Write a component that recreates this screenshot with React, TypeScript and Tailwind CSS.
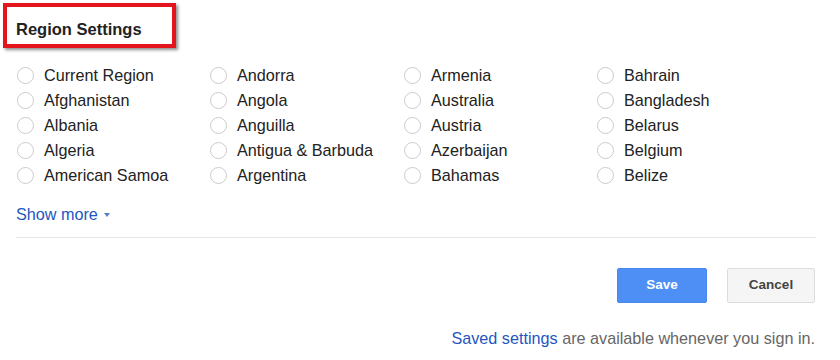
const regions = [
  ["Current Region", "Andorra", "Armenia", "Bahrain"],
  ["Afghanistan", "Angola", "Australia", "Bangladesh"],
  ["Albania", "Anguilla", "Austria", "Belarus"],
  ["Algeria", "Antigua & Barbuda", "Azerbaijan", "Belgium"],
  ["American Samoa", "Argentina", "Bahamas", "Belize"],
];

function Radio({ label }: { label: string }) {
  return (
    <label className="flex h-[25px] items-center gap-[10px] text-[16.2px] leading-[25px] text-[#222]">
      <span className="h-[17px] w-[17px] shrink-0 rounded-full border border-[#cbcbcb] bg-white" />
      <span className="whitespace-nowrap">{label}</span>
    </label>
  );
}

export default function App() {
  return (
    <div className="h-[360px] w-[840px] overflow-hidden bg-white font-['Liberation_Sans',Arial,sans-serif]">
      <div className="ml-[3px] mt-[3px] h-[45px] w-[173px] border-4 border-[#e3141b] pl-[9px] pt-[14px] shadow-[2px_2px_3px_rgba(0,0,0,0.45)]">
        <h2 className="whitespace-nowrap text-[16.5px] font-bold leading-none text-[#222]">Region Settings</h2>
      </div>

      <div className="pl-4 pr-6">
        <div className="mt-[14.5px] grid grid-cols-[193px_194px_193px_auto] pl-px">
          {regions.map((row) =>
            row.map((name) => <Radio key={name} label={name} />)
          )}
        </div>

        <button className="mt-4 flex h-5 items-center gap-[6px] text-[16.2px] leading-5 text-[#1f56c0]">
          Show more
          <span className="mt-[2px] h-0 w-0 border-x-[3.5px] border-t-4 border-x-transparent border-t-[#5a7fc8]" />
        </button>

        <div className="mt-[13.5px] h-px bg-[#e5e5e5]" />

        <div className="mt-[30px] flex justify-end gap-5 pr-px">
          <button className="h-[35px] w-[90px] rounded-[2px] border border-[#4787ee] bg-[#4d8ff5] text-[13.5px] font-bold text-white">
            Save
          </button>
          <button className="h-[35px] w-[88px] rounded-[2px] border border-[#dcdcdc] bg-[#f5f5f5] text-[13.5px] font-bold text-[#444]">
            Cancel
          </button>
        </div>

        <p className="mt-[24.5px] pr-px text-right text-[16.2px] leading-5 text-[#666]">
          <a className="text-[#1f56c0]">Saved settings</a> are available whenever you sign in.
        </p>
      </div>
    </div>
  );
}
